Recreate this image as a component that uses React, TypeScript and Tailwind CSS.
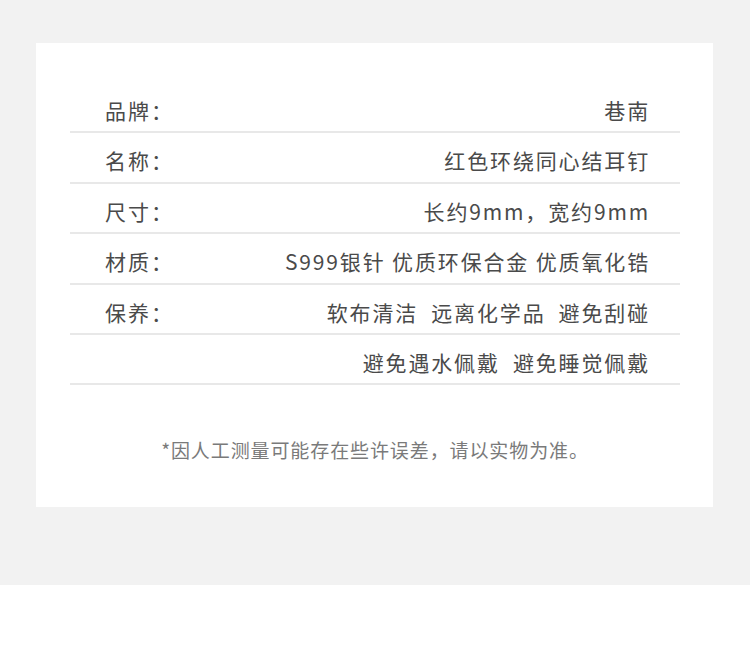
const rows: { label: string; value: string }[] = [
  { label: "品牌：", value: "巷南" },
  { label: "名称：", value: "红色环绕同心结耳钉" },
  { label: "尺寸：", value: "长约9mm，宽约9mm" },
  { label: "材质：", value: "S999银针 优质环保合金 优质氧化锆" },
  { label: "保养：", value: "软布清洁  远离化学品  避免刮碰" },
  { label: "", value: "避免遇水佩戴  避免睡觉佩戴" },
];

export default function App() {
  return (
    <div
      className="w-[750px] h-[672px] bg-white"
      style={{ fontFamily: '"Noto Sans CJK SC", "Noto Sans", sans-serif' }}
    >
      <div className="bg-[#f2f2f2] pt-[43px] pb-[78px] pl-[36px] pr-[37px]">
        <div className="h-[464px] bg-white pl-[34px] pr-[33px] pt-[40px]">
          {rows.map((row, i) => (
            <div
              key={i}
              className="flex h-[50.4px] items-start justify-between border-b-2 border-[#e8e8e8] pl-[35px] pr-[30px] pt-[13px] text-[21px] leading-[28px] tracking-[2px] text-[#4a4a4a] whitespace-pre"
            >
              <span>{row.label}</span>
              <span className="tracking-[1.85px]">{row.value}</span>
            </div>
          ))}
          <p className="mt-[52px] text-center text-[19px] leading-[26px] tracking-[0.9px] text-[#7a7a7a]">
            *因人工测量可能存在些许误差，请以实物为准。
          </p>
        </div>
      </div>
    </div>
  );
}
